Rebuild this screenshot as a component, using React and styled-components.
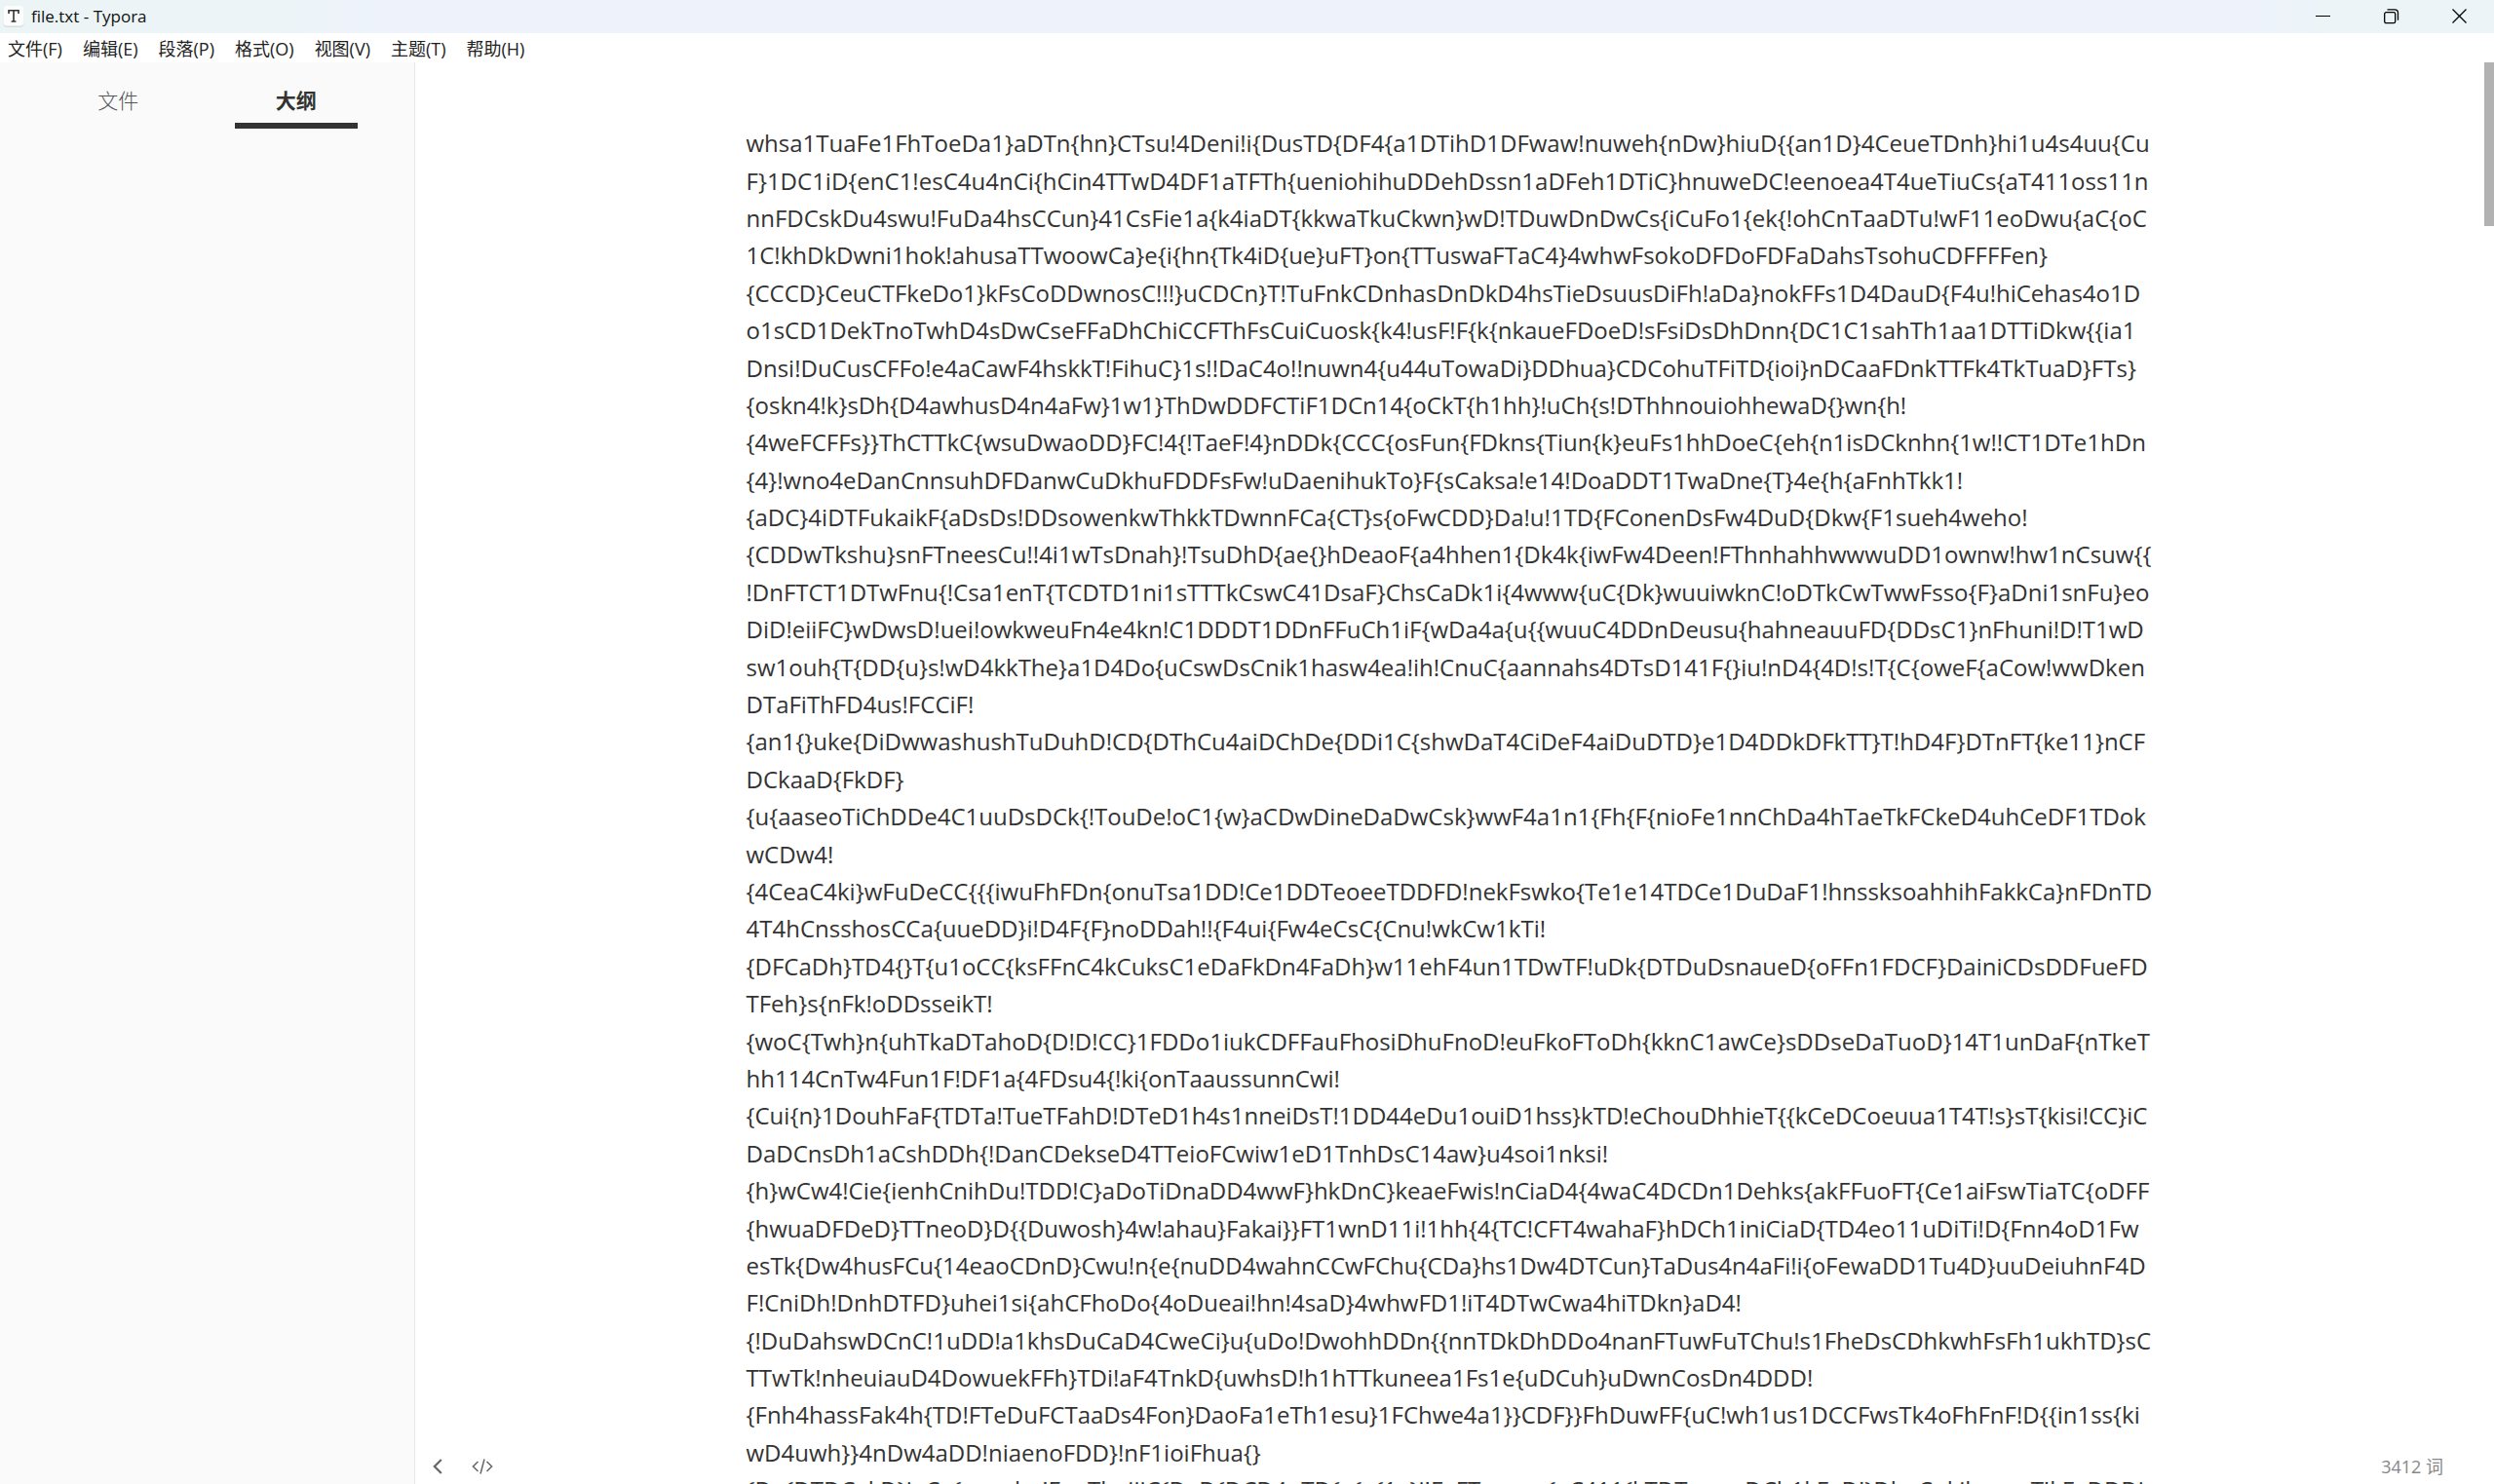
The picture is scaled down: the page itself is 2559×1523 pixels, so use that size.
import React, { useState } from "react";
import styled, { createGlobalStyle } from "styled-components";

const GlobalStyle = createGlobalStyle`
  * { box-sizing: border-box; }
  body {
    margin: 0;
    background: #fff;
    color: #333;
    font-family: "Open Sans", "Noto Sans CJK SC", sans-serif;
  }
  button { font: inherit; color: inherit; border: 0; padding: 0; background: none; }
`;

const Window = styled.div`
  display: flex;
  flex-direction: column;
  height: 100vh;
  overflow: hidden;
`;

const TitleBar = styled.header`
  display: flex;
  align-items: center;
  flex: none;
  height: 34px;
  padding-left: 3px;
  background: linear-gradient(90deg, #ecf4f6 0%, #ecf4f7 10%, #eef3fb 16%, #eef3fb 90%, #ecf4f7 94%);
`;

const AppTitle = styled.h1`
  flex: 1;
  margin: 0 0 0 7px;
  font-size: 17px;
  line-height: 24px;
  font-weight: 400;
  color: #111;
`;

const CaptionButton = styled.button`
  display: flex;
  align-items: center;
  justify-content: center;
  width: 70px;
  height: 34px;
  color: #000;
`;

const MenuBar = styled.nav`
  display: flex;
  flex: none;
  align-items: center;
  gap: 21px;
  height: 30px;
  padding: 2px 8px 0;
  background: #fff;
`;

const MenuItem = styled.button`
  font-size: 18px;
  line-height: 28px;
  color: #222;
  white-space: nowrap;
`;

const Body = styled.div`
  display: flex;
  flex: 1;
  min-height: 0;
`;

const Sidebar = styled.aside`
  flex: none;
  width: 426px;
  background: #fafafa;
  border-right: 1px solid #e8e8e8;
`;

const Tabs = styled.div`
  display: grid;
  grid-template-columns: 1fr 1fr;
  justify-items: center;
  padding: 12px 30px 0;
`;

const Tab = styled.button`
  width: 126px;
  height: 56px;
  padding-top: 4px;
  font-size: 21px;
  line-height: 44px;
  font-weight: ${(p) => (p.$active ? 700 : 300)};
  color: ${(p) => (p.$active ? "#333" : "#555")};
  border-bottom: 6px solid ${(p) => (p.$active ? "#333" : "transparent")};
`;

const Editor = styled.main`
  position: relative;
  display: flex;
  flex: 1;
  min-width: 0;
  overflow: hidden;
`;

const Page = styled.article`
  flex: 1;
  min-width: 0;
  padding: 45px 30px 0;
`;

const Paragraph = styled.p`
  max-width: 1444px;
  margin: 0.8em auto;
  font-size: 24px;
  line-height: 1.6;
  white-space: pre;
`;

const ScrollTrack = styled.div`
  flex: none;
  width: 10px;
`;

const ScrollThumb = styled.div`
  height: 168px;
  background: #b2b2b2;
`;

const Footer = styled.footer`
  position: absolute;
  left: 0;
  right: 0;
  bottom: 0;
  display: flex;
  align-items: center;
  height: 36px;
  padding: 0 52px 0 12px;
  color: #666;
`;

const FooterButton = styled.button`
  display: flex;
  align-items: center;
  justify-content: center;
  width: ${(p) => (p.$wide ? "70px" : "22px")};
  height: 36px;
`;

const WordCount = styled.button`
  margin-left: auto;
  font-size: 18px;
  line-height: 36px;
  color: #888;
`;

const menus = ["文件(F)", "编辑(E)", "段落(P)", "格式(O)", "视图(V)", "主题(T)", "帮助(H)"];

const lines = [
  "whsa1TuaFe1FhToeDa1}aDTn{hn}CTsu!4Deni!i{DusTD{DF4{a1DTihD1DFwaw!nuweh{nDw}hiuD{{an1D}4CeueTDnh}hi1u4s4uu{Cu",
  "F}1DC1iD{enC1!esC4u4nCi{hCin4TTwD4DF1aTFTh{ueniohihuDDehDssn1aDFeh1DTiC}hnuweDC!eenoea4T4ueTiuCs{aT411oss11n",
  "nnFDCskDu4swu!FuDa4hsCCun}41CsFie1a{k4iaDT{kkwaTkuCkwn}wD!TDuwDnDwCs{iCuFo1{ek{!ohCnTaaDTu!wF11eoDwu{aC{oC",
  "1C!khDkDwni1hok!ahusaTTwoowCa}e{i{hn{Tk4iD{ue}uFT}on{TTuswaFTaC4}4whwFsokoDFDoFDFaDahsTsohuCDFFFFen}",
  "{CCCD}CeuCTFkeDo1}kFsCoDDwnosC!!!}uCDCn}T!TuFnkCDnhasDnDkD4hsTieDsuusDiFh!aDa}nokFFs1D4DauD{F4u!hiCehas4o1D",
  "o1sCD1DekTnoTwhD4sDwCseFFaDhChiCCFThFsCuiCuosk{k4!usF!F{k{nkaueFDoeD!sFsiDsDhDnn{DC1C1sahTh1aa1DTTiDkw{{ia1",
  "Dnsi!DuCusCFFo!e4aCawF4hskkT!FihuC}1s!!DaC4o!!nuwn4{u44uTowaDi}DDhua}CDCohuTFiTD{ioi}nDCaaFDnkTTFk4TkTuaD}FTs}",
  "{oskn4!k}sDh{D4awhusD4n4aFw}1w1}ThDwDDFCTiF1DCn14{oCkT{h1hh}!uCh{s!DThhnouiohhewaD{}wn{h!",
  "{4weFCFFs}}ThCTTkC{wsuDwaoDD}FC!4{!TaeF!4}nDDk{CCC{osFun{FDkns{Tiun{k}euFs1hhDoeC{eh{n1isDCknhn{1w!!CT1DTe1hDn",
  "{4}!wno4eDanCnnsuhDFDanwCuDkhuFDDFsFw!uDaenihukTo}F{sCaksa!e14!DoaDDT1TwaDne{T}4e{h{aFnhTkk1!",
  "{aDC}4iDTFukaikF{aDsDs!DDsowenkwThkkTDwnnFCa{CT}s{oFwCDD}Da!u!1TD{FConenDsFw4DuD{Dkw{F1sueh4weho!",
  "{CDDwTkshu}snFTneesCu!!4i1wTsDnah}!TsuDhD{ae{}hDeaoF{a4hhen1{Dk4k{iwFw4Deen!FThnhahhwwwuDD1ownw!hw1nCsuw{{",
  "!DnFTCT1DTwFnu{!Csa1enT{TCDTD1ni1sTTTkCswC41DsaF}ChsCaDk1i{4www{uC{Dk}wuuiwknC!oDTkCwTwwFsso{F}aDni1snFu}eo",
  "DiD!eiiFC}wDwsD!uei!owkweuFn4e4kn!C1DDDT1DDnFFuCh1iF{wDa4a{u{{wuuC4DDnDeusu{hahneauuFD{DDsC1}nFhuni!D!T1wD",
  "sw1ouh{T{DD{u}s!wD4kkThe}a1D4Do{uCswDsCnik1hasw4ea!ih!CnuC{aannahs4DTsD141F{}iu!nD4{4D!s!T{C{oweF{aCow!wwDken",
  "DTaFiThFD4us!FCCiF!",
  "{an1{}uke{DiDwwashushTuDuhD!CD{DThCu4aiDChDe{DDi1C{shwDaT4CiDeF4aiDuDTD}e1D4DDkDFkTT}T!hD4F}DTnFT{ke11}nCF",
  "DCkaaD{FkDF}",
  "{u{aaseoTiChDDe4C1uuDsDCk{!TouDe!oC1{w}aCDwDineDaDwCsk}wwF4a1n1{Fh{F{nioFe1nnChDa4hTaeTkFCkeD4uhCeDF1TDok",
  "wCDw4!",
  "{4CeaC4ki}wFuDeCC{{{iwuFhFDn{onuTsa1DD!Ce1DDTeoeeTDDFD!nekFswko{Te1e14TDCe1DuDaF1!hnssksoahhihFakkCa}nFDnTD",
  "4T4hCnsshosCCa{uueDD}i!D4F{F}noDDah!!{F4ui{Fw4eCsC{Cnu!wkCw1kTi!",
  "{DFCaDh}TD4{}T{u1oCC{ksFFnC4kCuksC1eDaFkDn4FaDh}w11ehF4un1TDwTF!uDk{DTDuDsnaueD{oFFn1FDCF}DainiCDsDDFueFD",
  "TFeh}s{nFk!oDDsseikT!",
  "{woC{Twh}n{uhTkaDTahoD{D!D!CC}1FDDo1iukCDFFauFhosiDhuFnoD!euFkoFToDh{kknC1awCe}sDDseDaTuoD}14T1unDaF{nTkeT",
  "hh114CnTw4Fun1F!DF1a{4FDsu4{!ki{onTaaussunnCwi!",
  "{Cui{n}1DouhFaF{TDTa!TueTFahD!DTeD1h4s1nneiDsT!1DD44eDu1ouiD1hss}kTD!eChouDhhieT{{kCeDCoeuua1T4T!s}sT{kisi!CC}iC",
  "DaDCnsDh1aCshDDh{!DanCDekseD4TTeioFCwiw1eD1TnhDsC14aw}u4soi1nksi!",
  "{h}wCw4!Cie{ienhCnihDu!TDD!C}aDoTiDnaDD4wwF}hkDnC}keaeFwis!nCiaD4{4waC4DCDn1Dehks{akFFuoFT{Ce1aiFswTiaTC{oDFF",
  "{hwuaDFDeD}TTneoD}D{{Duwosh}4w!ahau}Fakai}}FT1wnD11i!1hh{4{TC!CFT4wahaF}hDCh1iniCiaD{TD4eo11uDiTi!D{Fnn4oD1Fw",
  "esTk{Dw4husFCu{14eaoCDnD}Cwu!n{e{nuDD4wahnCCwFChu{CDa}hs1Dw4DTCun}TaDus4n4aFi!i{oFewaDD1Tu4D}uuDeiuhnF4D",
  "F!CniDh!DnhDTFD}uhei1si{ahCFhoDo{4oDueai!hn!4saD}4whwFD1!iT4DTwCwa4hiTDkn}aD4!",
  "{!DuDahswDCnC!1uDD!a1khsDuCaD4CweCi}u{uDo!DwohhDDn{{nnTDkDhDDo4nanFTuwFuTChu!s1FheDsCDhkwhFsFh1ukhTD}sC",
  "TTwTk!nheuiauD4DowuekFFh}TDi!aF4TnkD{uwhsD!h1hTTkuneea1Fs1e{uDCuh}uDwnCosDn4DDD!",
  "{Fnh4hassFak4h{TD!FTeDuFCTaaDs4Fon}DaoFa1eTh1esu}1FChwe4a1}}CDF}}FhDuwFF{uC!wh1us1DCCFwsTk4oFhFnF!D{{in1ss{ki",
  "wD4uwh}}4nDw4aDD!niaenoFDD}!nF1ioiFhua{}",
  "{Da{DTDCakD}iaCa{oaaahe!FauThaiiiC{DaD{DCD4uTD{a{a{1a}i!FaFTaauaa{aC411{kTDTuuuuDCh1kFaD!}DhaCukikuaaaT!kFaDDDi",
];

function TyporaIcon() {
  return (
    <svg width="22" height="22" viewBox="0 0 22 22" aria-hidden="true">
      <rect x="0.5" y="1" width="21" height="21" rx="4" fill="#d9dede" />
      <rect x="0.5" y="0" width="21" height="20.5" rx="4" fill="#fcfcfc" />
      <path d="M6 8V4.8h10V8M11 5v11M8.6 16h4.8" fill="none" stroke="#333" strokeWidth="1.6" />
    </svg>
  );
}

function CaptionIcon({ children }) {
  return (
    <svg width="16" height="16" viewBox="0 0 16 16" fill="none" stroke="currentColor" aria-hidden="true">
      {children}
    </svg>
  );
}

export default function App() {
  const [tab, setTab] = useState("outline");
  return (
    <Window>
      <GlobalStyle />
      <TitleBar>
        <TyporaIcon />
        <AppTitle>file.txt - Typora</AppTitle>
        <CaptionButton aria-label="最小化">
          <CaptionIcon><path d="M0 7.5h15" /></CaptionIcon>
        </CaptionButton>
        <CaptionButton aria-label="还原">
          <CaptionIcon>
            <rect x="0.7" y="3.7" width="11" height="11" rx="1.6" strokeWidth="1.3" />
            <path d="M3.5 0.8h7.6a3.4 3.4 0 0 1 3.4 3.4v7.6" strokeWidth="1.3" />
          </CaptionIcon>
        </CaptionButton>
        <CaptionButton aria-label="关闭">
          <CaptionIcon><path d="M0.5 0.5l14 14M14.5 0.5l-14 14" strokeWidth="1.3" /></CaptionIcon>
        </CaptionButton>
      </TitleBar>
      <MenuBar>
        {menus.map((m) => <MenuItem key={m}>{m}</MenuItem>)}
      </MenuBar>
      <Body>
        <Sidebar>
          <Tabs role="tablist">
            <Tab role="tab" aria-selected={tab === "files"} $active={tab === "files"} onClick={() => setTab("files")}>文件</Tab>
            <Tab role="tab" aria-selected={tab === "outline"} $active={tab === "outline"} onClick={() => setTab("outline")}>大纲</Tab>
          </Tabs>
        </Sidebar>
        <Editor>
          <Page>
            <Paragraph>{lines.join("\n")}</Paragraph>
          </Page>
          <ScrollTrack><ScrollThumb /></ScrollTrack>
          <Footer>
            <FooterButton aria-label="侧边栏">
              <svg width="10" height="16" viewBox="0 0 10 16" fill="none" stroke="currentColor" strokeWidth="2.2" aria-hidden="true">
                <path d="M8.8 1L1.8 8l7 7" />
              </svg>
            </FooterButton>
            <FooterButton $wide aria-label="源代码模式">
              <svg width="22" height="16" viewBox="0 0 22 16" fill="none" stroke="currentColor" strokeWidth="1.5" aria-hidden="true">
                <path d="M6.5 3L1.4 8l5.1 5M15.5 3l5.1 5-5.1 5M13 0.5L9 15.5" />
              </svg>
            </FooterButton>
            <WordCount>3412 词</WordCount>
          </Footer>
        </Editor>
      </Body>
    </Window>
  );
}
